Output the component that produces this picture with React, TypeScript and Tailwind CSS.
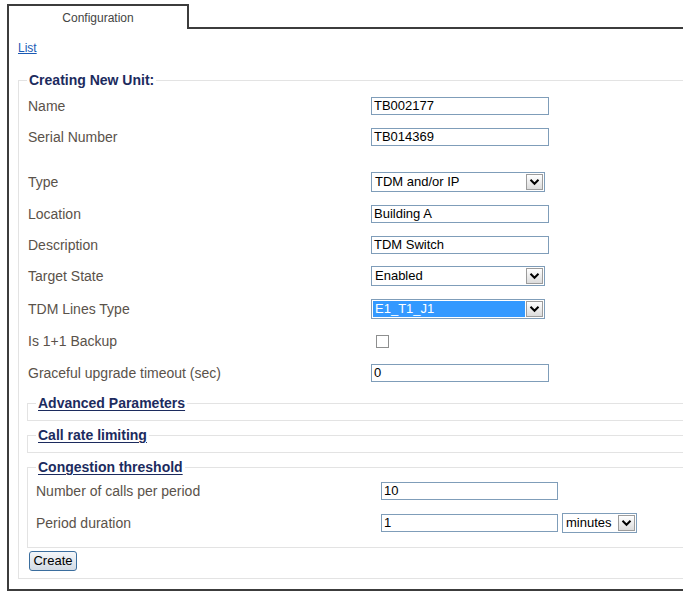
import React from "react";

const font = { fontFamily: '"Liberation Sans", Arial, sans-serif' };

function Chevron() {
  return (
    <svg width="11" height="8" viewBox="0 0 11 8">
      <path d="M1.5 1.8 L5.5 5.8 L9.5 1.8" fill="none" stroke="#000" strokeWidth="2" />
    </svg>
  );
}

function DropBtn() {
  return (
    <div className="w-[17px] h-[16px] mr-[1px] shrink-0 border border-[#9c9c9c] bg-linear-to-b from-[#ffffff] to-[#dcdcdc] flex items-center justify-center">
      <Chevron />
    </div>
  );
}

function TextBox({ value, w = "w-[178px]" }: { value: string; w?: string }) {
  return (
    <div className={`${w} h-[18px] border border-[#7f9db9] bg-white pl-[2px] text-[13px] leading-[16px] text-black`}>
      {value}
    </div>
  );
}

function Select({ value, selected = false }: { value: string; selected?: boolean }) {
  return (
    <div className="w-[174px] h-[20px] border border-[#7f9db9] bg-white flex items-center">
      {selected ? (
        <div className="flex-1 self-stretch m-[1px] bg-[#3399ff] text-white pl-[2px] text-[13px] leading-[16px]">
          {value}
        </div>
      ) : (
        <div className="flex-1 pl-[3px] text-[13px] leading-[16px] text-black">{value}</div>
      )}
      <DropBtn />
    </div>
  );
}

function Row({ label, h, children, lw = "w-[344px]" }: { label: string; h: string; children: React.ReactNode; lw?: string }) {
  return (
    <div className={`flex items-center ${h}`}>
      <div className={`${lw} shrink-0 pl-[1px] text-[14px] leading-[16px] text-[#5a524a]`}>{label}</div>
      {children}
    </div>
  );
}

function InnerLegend({ text }: { text: string }) {
  return (
    <legend className="px-[2px] text-[14px] leading-[16px] font-bold text-[#1c2b5e] underline decoration-[#1c2b5e] underline-offset-2">
      {text}
    </legend>
  );
}

export default function App() {
  return (
    <div className="w-[683px] h-[600px] overflow-hidden bg-white" style={font}>
      <div className="w-[820px]">
        <div className="flex pt-[4px] pl-[7px]">
          <div className="w-[182px] h-[25px] border-t-2 border-l-2 border-r-2 border-[#3c3c3c] flex items-center justify-center text-[12px] text-[#444]">
            Configuration
          </div>
          <div className="flex-1 h-[25px] border-b-2 border-[#3c3c3c]"></div>
        </div>
        <div className="ml-[7px] border-l-2 border-b-2 border-[#3c3c3c] pl-[9px] pb-[10px]">
          <div className="pt-[12px] text-[12px] leading-[14px]">
            <a href="#" className="text-[#1a5ab4] underline">List</a>
          </div>
          <fieldset className="mt-[17px] border border-[#e3e3e3] pl-[8px] pb-[7px]">
            <legend className="px-[2px] text-[14px] leading-[16px] font-bold text-[#1c2b5e]">Creating New Unit:</legend>
            <div className="pt-[2px]">
              <Row label="Name" h="h-[31px]"><TextBox value="TB002177" /></Row>
              <Row label="Serial Number" h="h-[32px]"><TextBox value="TB014369" /></Row>
              <div className="h-[13px]"></div>
              <Row label="Type" h="h-[32px]"><Select value="TDM and/or IP" /></Row>
              <Row label="Location" h="h-[31px]"><TextBox value="Building A" /></Row>
              <Row label="Description" h="h-[31px]"><TextBox value="TDM Switch" /></Row>
              <Row label="Target State" h="h-[32px]"><Select value="Enabled" /></Row>
              <Row label="TDM Lines Type" h="h-[33px]"><Select value="E1_T1_J1" selected /></Row>
              <Row label="Is 1+1 Backup" h="h-[32px]">
                <div className="ml-[5px] w-[13px] h-[13px] border border-[#8e8f8f] bg-white"></div>
              </Row>
              <Row label="Graceful upgrade timeout (sec)" h="h-[32px]"><TextBox value="0" /></Row>
            </div>
            <fieldset className="mt-[6px] border border-[#e3e3e3] pl-[8px] pb-[9px]">
              <InnerLegend text="Advanced Parameters" />
            </fieldset>
            <fieldset className="mt-[6px] border border-[#e3e3e3] pl-[8px] pb-[9px]">
              <InnerLegend text="Call rate limiting" />
            </fieldset>
            <fieldset className="mt-[6px] border border-[#e3e3e3] pl-[8px] pb-[9px]">
              <InnerLegend text="Congestion threshold" />
              <div className="flex items-center h-[32px]">
                <div className="w-[345px] shrink-0 text-[14px] leading-[16px] text-[#5a524a]">Number of calls per period</div>
                <TextBox value="10" w="w-[177px]" />
              </div>
              <div className="flex items-center h-[31px]">
                <div className="w-[345px] shrink-0 text-[14px] leading-[16px] text-[#5a524a]">Period duration</div>
                <TextBox value="1" w="w-[177px]" />
                <div className="ml-[4px] w-[75px] h-[20px] border border-[#7f9db9] bg-white flex items-center">
                  <div className="flex-1 pl-[3px] text-[13px] leading-[16px] text-black">minutes</div>
                  <DropBtn />
                </div>
              </div>
            </fieldset>
            <button className="ml-[2px] mt-[3px] w-[48px] h-[20px] border border-[#3b6e9e] rounded-[3px] bg-linear-to-b from-[#f4f6f9] to-[#d3dbe5] text-[13px] leading-[16px] text-black flex items-center justify-center">
              Create
            </button>
          </fieldset>
        </div>
      </div>
    </div>
  );
}
